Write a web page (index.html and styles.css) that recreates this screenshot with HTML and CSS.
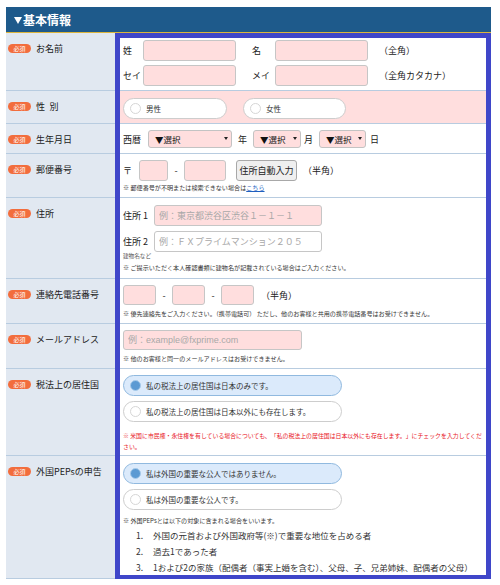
FILE: index.html
```html
<!DOCTYPE html>
<html lang="ja">
<head>
<meta charset="utf-8">
<title>基本情報</title>
<link rel="stylesheet" href="styles.css">
</head>
<body>
<section class="form">
  <h2 class="head"><span class="tri"></span>基本情報</h2>
  <div class="rows">
    <div class="row">
      <div class="lab"><span class="req">必須</span><span>お名前</span></div>
      <div class="val v-name">
        <div class="line"><span class="k k-n">姓</span><input class="in w-name" type="text"><span class="k k-n2">名</span><input class="in w-name" type="text"><span class="hint h-name">（全角）</span></div>
        <div class="line"><span class="k k-n">セイ</span><input class="in w-name" type="text"><span class="k k-n2">メイ</span><input class="in w-name" type="text"><span class="hint h-name">（全角カタカナ）</span></div>
      </div>
    </div>
    <div class="row row-pink">
      <div class="lab"><span class="req">必須</span><span>性&ensp;別</span></div>
      <div class="val v-sex">
        <label class="pill p-sex"><span class="dot"></span>男性</label>
        <label class="pill p-sex2"><span class="dot"></span>女性</label>
      </div>
    </div>
    <div class="row">
      <div class="lab"><span class="req">必須</span><span>生年月日</span></div>
      <div class="val v-birth">
        <span class="k k-era">西暦</span>
        <span class="sel s-year">▼選択</span><span class="u u-y">年</span>
        <span class="sel s-mon">▼選択</span><span class="u u-m">月</span>
        <span class="sel s-day">▼選択</span><span class="u u-d">日</span>
      </div>
    </div>
    <div class="row">
      <div class="lab"><span class="req">必須</span><span>郵便番号</span></div>
      <div class="val v-zip">
        <div class="line"><span class="k k-zip">〒</span><input class="in w-zip1" type="text"><span class="dash">-</span><input class="in w-zip2" type="text"><button class="btn" type="button">住所自動入力</button><span class="hint h-zip">（半角）</span></div>
        <p class="note n-zip">※ 郵便番号が不明または検索できない場合は<a href="#">こちら</a></p>
      </div>
    </div>
    <div class="row">
      <div class="lab"><span class="req">必須</span><span>住所</span></div>
      <div class="val v-addr">
        <div class="line"><span class="k k-addr">住所 1</span><input class="in w-addr" type="text" placeholder="例：東京都渋谷区渋谷１－１－１"></div>
        <div class="line l-addr2"><span class="k k-addr">住所 2</span><input class="in in-white w-addr" type="text" placeholder="例：ＦＸプライムマンション２０５"></div>
        <p class="tiny">建物名など</p>
        <p class="note n-addr">※ ご提示いただく本人確認書類に建物名が記載されている場合はご入力ください。</p>
      </div>
    </div>
    <div class="row">
      <div class="lab"><span class="req">必須</span><span>連絡先電話番号</span></div>
      <div class="val v-tel">
        <div class="line line-20"><input class="in in-20 w-tel" type="text"><span class="dash">-</span><input class="in in-20 w-tel" type="text"><span class="dash">-</span><input class="in in-20 w-tel" type="text"><span class="hint h-tel">（半角）</span></div>
        <p class="note n-tel">※ 優先連絡先をご入力ください。（携帯電話可） ただし、他のお客様と共用の携帯電話番号はお受けできません。</p>
      </div>
    </div>
    <div class="row">
      <div class="lab"><span class="req">必須</span><span>メールアドレス</span></div>
      <div class="val v-mail">
        <div class="line line-20"><input class="in in-20 w-mail" type="text" placeholder="例：example@fxprime.com"></div>
        <p class="note n-mail">※ 他のお客様と同一のメールアドレスはお受けできません。</p>
      </div>
    </div>
    <div class="row">
      <div class="lab"><span class="req">必須</span><span>税法上の居住国</span></div>
      <div class="val v-tax">
        <div class="stack">
          <label class="pill wide on"><span class="dot"></span>私の税法上の居住国は日本のみです。</label>
          <label class="pill wide"><span class="dot"></span>私の税法上の居住国は日本以外にも存在します。</label>
        </div>
        <p class="red">※ 米国に市民権・永住権を有している場合についても、「私の税法上の居住国は日本以外にも存在します。」にチェックを入力してくだ<br>さい。</p>
      </div>
    </div>
    <div class="row">
      <div class="lab"><span class="req">必須</span><span>外国PEPsの申告</span></div>
      <div class="val v-peps">
        <div class="stack">
          <label class="pill wide on"><span class="dot"></span>私は外国の重要な公人ではありません。</label>
          <label class="pill wide"><span class="dot"></span>私は外国の重要な公人です。</label>
        </div>
        <p class="note n-peps">※ 外国PEPsとは以下の対象に含まれる場合をいいます。</p>
        <ol class="list">
          <li><span class="num">1.</span>外国の元首および外国政府等(※)で重要な地位を占める者</li>
          <li><span class="num">2.</span>過去1であった者</li>
          <li><span class="num">3.</span>1および2の家族（配偶者（事実上婚を含む）、父母、子、兄弟姉妹、配偶者の父母）</li>
        </ol>
      </div>
    </div>
    <div class="focus"></div>
  </div>
</section>
</body>
</html>
```
FILE: styles.css
```css
* { box-sizing: border-box; }
body {
  margin: 0;
  background: #fff;
  font-family: "Noto Sans CJK JP", "Noto Sans", sans-serif;
  color: #333;
}
.form { width: 485px; margin: 7px 0 0 6px; }
.head {
  margin: 0;
  height: 26px;
  background: #1e5a8b;
  border-bottom: 1px solid #dcb53c;
  color: #fff;
  font-size: 12px;
  font-weight: bold;
  line-height: 25px;
  display: flex;
  align-items: center;
  padding-left: 8px;
}
.tri {
  width: 0; height: 0;
  border-left: 4px solid transparent;
  border-right: 4px solid transparent;
  border-top: 7px solid #fff;
  margin: 2px 1px 0 0;
}
.rows { position: relative; }
.focus {
  position: absolute;
  left: 109px; right: 0; top: 0; bottom: -1px;
  border: 5px solid #3f46c9;
  pointer-events: none;
}
.row {
  display: grid;
  grid-template-columns: 109px 376px;
  border-bottom: 1px solid #b8cce0;
}
.lab {
  background: #e1e8f1;
  display: flex;
  align-items: flex-start;
  gap: 5px;
  padding: 11px 0 0 2px;
  font-size: 9px;
  line-height: 9px;
  color: #222;
}
.req {
  flex: none;
  width: 23px; height: 9px;
  border-radius: 5px;
  background: #f26d3d;
  color: #fff;
  font-size: 6px;
  line-height: 9px;
  text-align: center;
}
.val { padding: 0 8px; font-size: 9px; line-height: 9px; color: #222; }
.val p { margin: 0; }
.line { display: flex; align-items: center; height: 21px; }
.line-20 { height: 20px; }
.in {
  height: 21px;
  margin: 0;
  border: 1px solid #c6c6c6;
  border-radius: 3px;
  background: #ffdede;
  padding: 0 4px;
  font: 9px "Noto Sans CJK JP", sans-serif;
  color: #333;
  outline: none;
}
.in-20 { height: 20px; }
.in::placeholder { color: #a8a8a8; }
.in-white { background: #fff; }
.k { flex: none; }

/* name */
.v-name { padding-top: 7px; padding-bottom: 4px; display: flex; flex-direction: column; gap: 4px; }
.k-n { width: 20px; }
.w-name { width: 93px; }
.k-n2 { width: 23px; margin-left: 16px; }
.h-name { margin-left: 11px; }

/* sex */
.row-pink .val { background: #ffdede; }
.v-sex { padding-top: 7px; padding-bottom: 4px; display: flex; gap: 16px; }
.pill {
  display: flex;
  align-items: center;
  height: 21px;
  border: 1px solid #cdcdcd;
  border-radius: 11px;
  background: #fff;
  padding-left: 6px;
  gap: 5px;
  font-size: 7.5px;
  line-height: 9px;
  color: #333;
}
.p-sex { width: 104px; }
.p-sex2 { width: 103px; }
.dot {
  flex: none;
  width: 11px; height: 11px;
  border-radius: 50%;
  border: 1px solid #d6d6d6;
  background: #fff;
}
.pill.on { background: #dbeafb; border-color: #90b9df; }
.pill.on .dot { background: #5b9ad3; border-color: #a8cbea; }
.wide { width: 219px; }
.stack { display: flex; flex-direction: column; gap: 5px; }

/* birth */
.v-birth { padding-top: 6px; padding-bottom: 5px; display: flex; align-items: center; }
.k-era { width: 25px; }
.sel {
  position: relative;
  flex: none;
  height: 18px;
  border: 1px solid #c3c3c3;
  border-radius: 3px;
  background: #ffdede;
  font-size: 8.5px;
  line-height: 16px;
  padding-left: 6px;
  color: #111;
}
.sel::after {
  content: "";
  position: absolute;
  right: 3px; top: 6px;
  border-left: 2px solid transparent;
  border-right: 2px solid transparent;
  border-top: 3px solid #222;
}
.s-year { width: 84px; }
.s-mon { width: 48px; }
.s-day { width: 47px; }
.u-y { margin: 0 6px; }
.u-m { margin: 0 6px 0 3px; }
.u-d { margin-left: 4px; }

/* zip */
.v-zip { padding-top: 6px; padding-bottom: 5px; }
.k-zip { width: 16px; }
.w-zip1 { width: 29px; }
.w-zip2 { width: 42px; }
.dash { flex: none; width: 16px; text-align: center; }
.btn {
  margin-left: 10px;
  width: 61px; height: 21px;
  border: 1px solid #a8a8a8;
  border-radius: 3px;
  background: #efefef;
  font: 9px "Noto Sans CJK JP", sans-serif;
  color: #222;
  padding: 0;
}
.h-zip { margin-left: 6px; }
.note { font-size: 6.1px; line-height: 9px; white-space: nowrap; color: #333; }
.note a { color: #1f5fbf; text-decoration: underline; }
.val .n-zip { margin-top: 2px; }

/* address */
.v-addr { padding-top: 7px; padding-bottom: 6px; }
.l-addr2 { margin-top: 5px; }
.k-addr { width: 31px; }
.w-addr { width: 168px; }
.val .tiny { margin-top: 1px; font-size: 5.6px; line-height: 6px; color: #555; }
.val .n-addr { margin-top: 4px; }

/* tel */
.v-tel { padding-top: 6px; padding-bottom: 5px; }
.w-tel { width: 33px; }
.h-tel { margin-left: 7px; }
.val .n-tel { margin-top: 4px; }

/* mail */
.v-mail { padding-top: 6px; padding-bottom: 5px; }
.w-mail { width: 179px; font-family: "Liberation Sans", "Noto Sans CJK JP", sans-serif; }
.val .n-mail { margin-top: 4px; }

/* tax */
.v-tax { padding-top: 6px; padding-bottom: 3px; }
.val .red { margin-top: 8px; color: #e8141e; font-size: 5.9px; line-height: 11px; white-space: nowrap; }

/* peps */
.v-peps { padding-top: 7px; padding-bottom: 3px; }
.val .n-peps { margin-top: 6px; }
.list { margin: 2px 0 0; padding: 0 0 0 13px; list-style: none; font-size: 8.5px; line-height: 16px; color: #333; }
.list li { display: flex; white-space: nowrap; }
.num { width: 17px; flex: none; }
```
